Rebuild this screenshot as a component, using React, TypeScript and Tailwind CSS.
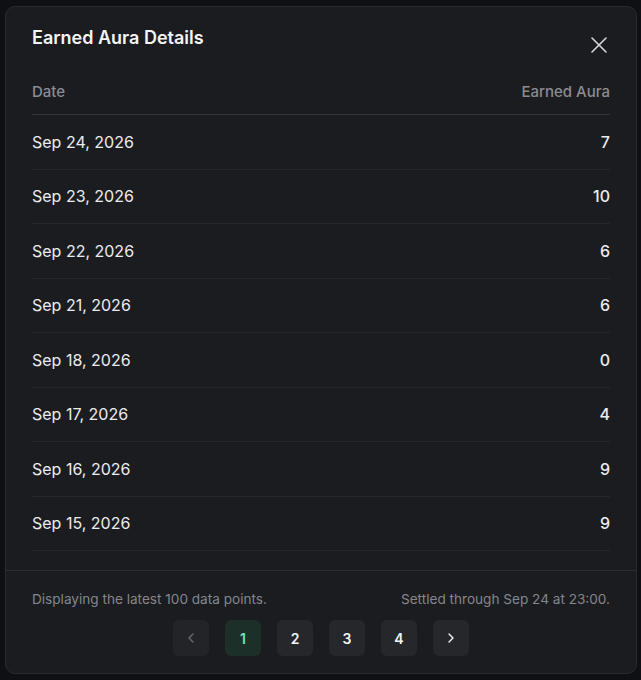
import { X, ChevronLeft, ChevronRight } from 'lucide-react';

const ROWS = [
  { date: 'Sep 24, 2026', aura: 7 },
  { date: 'Sep 23, 2026', aura: 10 },
  { date: 'Sep 22, 2026', aura: 6 },
  { date: 'Sep 21, 2026', aura: 6 },
  { date: 'Sep 18, 2026', aura: 0 },
  { date: 'Sep 17, 2026', aura: 4 },
  { date: 'Sep 16, 2026', aura: 9 },
  { date: 'Sep 15, 2026', aura: 9 },
  { date: 'Sep 14, 2026', aura: 10 },
  { date: 'Sep 13, 2026', aura: 5 },
];

const PAGES = [1, 2, 3, 4];

function App() {
  return (
    <div
      className="min-h-[680px] w-[641px] bg-[#0f1013] pl-[5px] pt-[6px]"
      style={{ fontFamily: 'Inter, "Noto Sans", sans-serif' }}
    >
      <div className="flex h-[668px] w-[632px] flex-col overflow-hidden rounded-[10px] border border-[#2a2b30] bg-[#1b1c20]">
        <div className="flex items-start justify-between px-[26px] pb-[18px] pt-[17px]">
          <h2 className="text-[18px] font-semibold leading-7 text-[#f4f4f5]">Earned Aura Details</h2>
          <button className="mb-[-7px] mr-[-3px] mt-[7px] text-[#d4d4d8]">
            <X size={28} strokeWidth={1.4} />
          </button>
        </div>

        <div className="flex-1 overflow-hidden px-[26px]">
          <div className="flex h-[45px] items-center justify-between border-b border-[#34353a] text-[15px] font-medium text-[#8b8c91]">
            <span>Date</span>
            <span>Earned Aura</span>
          </div>
          {ROWS.map((row) => (
            <div
              key={row.date}
              className="flex h-[54.5px] items-center justify-between border-b border-[#26272b] text-[16px] text-[#ececee]"
            >
              <span>{row.date}</span>
              <span className="font-medium">{row.aura}</span>
            </div>
          ))}
        </div>

        <div className="border-t border-[#2c2d32] px-[26px] pb-[17px] pt-[18px]">
          <div className="flex items-center justify-between text-[13.6px] leading-5 text-[#85868b]">
            <span>Displaying the latest 100 data points.</span>
            <span>Settled through Sep 24 at 23:00.</span>
          </div>
          <div className="mt-[11px] flex justify-center gap-4">
            <button className="flex size-9 items-center justify-center rounded-md bg-[#232428] text-[#6b6c71]">
              <ChevronLeft size={16} strokeWidth={2} />
            </button>
            {PAGES.map((page) => (
              <button
                key={page}
                className={`flex size-9 items-center justify-center rounded-md text-[14px] font-semibold ${
                  page === 1 ? 'bg-[#1c3029] text-[#6ee7b7]' : 'bg-[#26272b] text-[#f4f4f5]'
                }`}
              >
                {page}
              </button>
            ))}
            <button className="flex size-9 items-center justify-center rounded-md bg-[#26272b] text-[#f4f4f5]">
              <ChevronRight size={16} strokeWidth={2} />
            </button>
          </div>
        </div>
      </div>
    </div>
  );
}

export default App;
